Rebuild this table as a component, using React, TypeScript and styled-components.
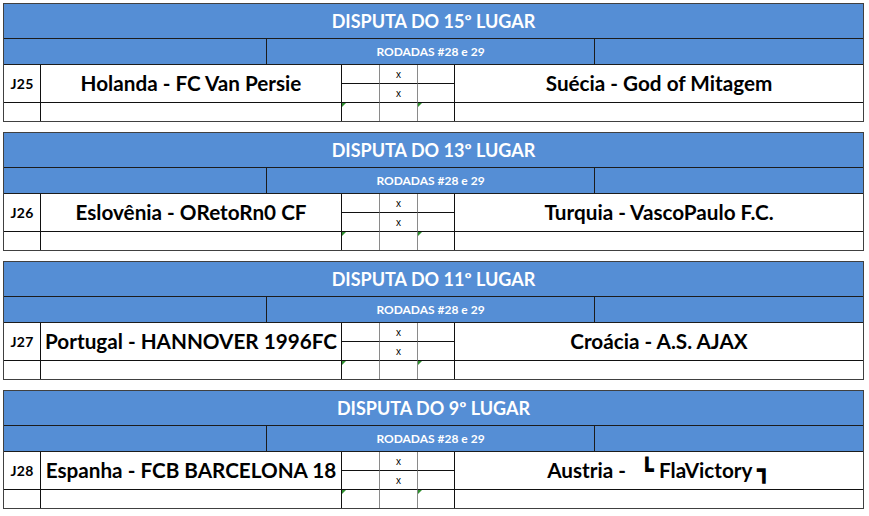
import React from 'react'
import styled, { createGlobalStyle } from 'styled-components';

const GlobalStyle = createGlobalStyle`
  html, body {
    margin: 0;
    padding: 0;
    background: #ffffff;
  }
  body {
    font-family: Lato, "Liberation Sans", sans-serif;
  }
`

const Sheet = styled.main`
  display: flex;
  flex-direction: column;
  gap: 10px;
  padding: 3px 0 0 3px;
  width: 861px;
`

const Block = styled.section`
  border: 1px solid #404040;
  display: flex;
  flex-direction: column;
  width: 859px;
`

const Title = styled.div`
  height: 34px;
  background: #558ed5;
  border-bottom: 1px solid #1c1c1c;
  color: #ffffff;
  font-weight: 700;
  font-size: 18px;
  display: flex;
  align-items: center;
  justify-content: center;
  box-sizing: content-box;
`

const SubRow = styled.div`
  display: grid;
  grid-template-columns: 263px 328px 268px;
  height: 25px;
  border-bottom: 1px solid #1c1c1c;
  background: #558ed5;
  box-sizing: content-box;
`

const SubCell = styled.div`
  border-right: 1px solid #1c1c1c;
  color: #ffffff;
  font-weight: 700;
  font-size: 12px;
  display: flex;
  align-items: center;
  justify-content: center;

  &:last-child {
    border-right: none;
  }
`

const Body = styled.div`
  display: grid;
  grid-template-columns: 37px 301px 38px 38px 37px 408px;
  grid-template-rows: 19px 19px 18px;
`

type CellProps = {
  $soft?: boolean
  $last?: boolean
  $span?: boolean
  $bottom?: boolean
}

const Cell = styled.div<CellProps>`
  position: relative;
  box-sizing: border-box;
  border-right: ${p => p.$last ? 'none' : p.$soft ? '1px solid #8a8a8a' : '1px solid #111'};
  border-bottom: ${p => p.$bottom ? 'none' : '1px solid #111'};
  grid-row: ${p => p.$span ? 'span 2' : 'auto'};
  display: flex;
  align-items: center;
  justify-content: center;
  color: #000;
`

const Code = styled(Cell)`
  font-weight: 700;
  font-size: 14px;
  letter-spacing: 0.3px;
`

const Team = styled(Cell)`
  font-weight: 700;
  font-size: 20.7px;
  white-space: pre;
  padding-bottom: 1px;
  overflow: hidden;
`

const Corner = styled.span<{ $drop?: boolean }>`
  font-family: "DejaVu Sans", sans-serif;
  font-weight: 400;
  font-size: 23px;
  vertical-align: ${p => p.$drop ? '-1px' : '0'};
  margin: ${p => p.$drop ? '0' : '0 0 0 4px'};
  line-height: 1;
`

const Score = styled(Cell)`
  font-size: 10px;
  font-family: "Liberation Sans", sans-serif;
`

const Flagged = styled(Cell)`
  &::before {
    content: '';
    position: absolute;
    top: 0;
    left: 0;
    border-top: 4px solid #2f8f2f;
    border-right: 4px solid transparent;
  }
`

type Match = {
  place: string
  code: string
  home: string
  away: React.ReactNode
}

const matches: Match[] = [
  { place: '15º', code: 'J25', home: 'Holanda - FC Van Persie', away: 'Suécia - God of Mitagem' },
  { place: '13º', code: 'J26', home: 'Eslovênia - ORetoRn0 CF', away: 'Turquia - VascoPaulo F.C.' },
  { place: '11º', code: 'J27', home: 'Portugal - HANNOVER 1996FC', away: 'Croácia - A.S. AJAX' },
  {
    place: '9º',
    code: 'J28',
    home: 'Espanha - FCB BARCELONA 18',
    away: <>Austria -  <Corner>┗</Corner> FlaVictory <Corner $drop>┓</Corner></>,
  },
]

function MatchBlock({ match }: { match: Match }) {
  return (
    <Block>
      <Title>DISPUTA DO {match.place} LUGAR</Title>
      <SubRow>
        <SubCell />
        <SubCell>RODADAS #28 e 29</SubCell>
        <SubCell />
      </SubRow>
      <Body>
        <Code $span>{match.code}</Code>
        <Team $span>{match.home}</Team>
        <Score $soft />
        <Score $soft>x</Score>
        <Score />
        <Team $span $last>{match.away}</Team>
        <Score $soft />
        <Score $soft>x</Score>
        <Score />

        <Cell $bottom />
        <Cell $bottom />
        <Flagged $bottom $soft />
        <Cell $bottom $soft />
        <Flagged $bottom />
        <Cell $bottom $last />
      </Body>
    </Block>
  )
}

function App() {
  return (
    <>
      <GlobalStyle />
      <Sheet>
        {matches.map(m => <MatchBlock key={m.code} match={m} />)}
      </Sheet>
    </>
  )
}

export default App
